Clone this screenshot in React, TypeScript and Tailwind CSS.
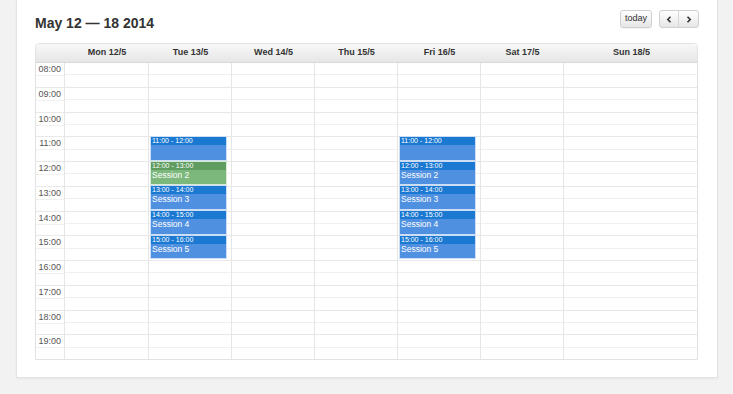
import React from 'react';

const days = [
  { label: 'Mon 12/5', w: 'w-[84px]' },
  { label: 'Tue 13/5', w: 'w-[83px]' },
  { label: 'Wed 14/5', w: 'w-[83px]' },
  { label: 'Thu 15/5', w: 'w-[83px]' },
  { label: 'Fri 16/5', w: 'w-[83px]' },
  { label: 'Sat 17/5', w: 'w-[83px]' },
  { label: 'Sun 18/5', w: 'w-[135px]' },
];

const hours = ['08:00', '09:00', '10:00', '11:00', '12:00', '13:00', '14:00', '15:00', '16:00', '17:00', '18:00', '19:00'];

const HOUR = 296 / 12;

type Ev = { start: number; title: string; green?: boolean };

const tueEvents: Ev[] = [
  { start: 11, title: '' },
  { start: 12, title: 'Session 2', green: true },
  { start: 13, title: 'Session 3' },
  { start: 14, title: 'Session 4' },
  { start: 15, title: 'Session 5' },
];

const friEvents: Ev[] = [
  { start: 11, title: '' },
  { start: 12, title: 'Session 2' },
  { start: 13, title: 'Session 3' },
  { start: 14, title: 'Session 4' },
  { start: 15, title: 'Session 5' },
];

const pad = (n: number) => (n < 10 ? '0' + n : '' + n) + ':00';

function Event({ ev }: { ev: Ev }) {
  return (
    <div
      className={`absolute left-[1px] w-[77px] flex flex-col border border-white/70 ${ev.green ? 'bg-[#7cb87c]' : 'bg-[#5090e0]'}`}
      style={{ top: (ev.start - 8) * HOUR - 1, height: HOUR }}
    >
      <div className={`h-[8px] px-[1px] text-[7px] leading-[8px] text-white ${ev.green ? 'bg-[#5f9c5f]' : 'bg-[#1b79d2]'}`}>
        {pad(ev.start)} - {pad(ev.start + 1)}
      </div>
      <div className="px-[1px] text-[8.5px] leading-[11px] text-white">{ev.title}</div>
    </div>
  );
}

function Slots({ labels }: { labels?: boolean }) {
  return (
    <div className="flex flex-col h-full">
      {hours.map((h) => (
        <div key={h} className="flex-1 flex flex-col border-b border-[#e8e8e8] last:border-b-0">
          <div className="flex-1 border-b border-[#f0f0f0] text-[9px] text-[#555] text-right pr-[3px] leading-[12px]">
            {labels ? h : null}
          </div>
          <div className="flex-1" />
        </div>
      ))}
    </div>
  );
}

export default function App() {
  return (
    <div className="min-h-screen bg-[#f2f2f2] pl-4 font-['Liberation_Sans',Arial,sans-serif] text-[#333]">
      <div className="w-[702px] h-[378px] bg-white border-x border-b border-[#e3e3e3] shadow-[0_1px_2px_rgba(0,0,0,0.05)] px-[18px]">
        <div className="flex items-center justify-between h-[43px] pt-[1px]">
          <h2 className="text-[14px] font-bold text-[#333] mt-[3px]">May 12 — 18 2014</h2>
          <div className="flex items-center gap-[7px] -mt-[6px]">
            <button className="h-[18px] px-[4px] text-[9px] text-[#333] bg-gradient-to-b from-white to-[#e6e6e6] border border-[#d0d0d0] rounded-[3px] shadow-[0_1px_1px_rgba(0,0,0,0.05)]">
              today
            </button>
            <div className="flex h-[18px] border border-[#d0d0d0] rounded-[3px] bg-gradient-to-b from-white to-[#e6e6e6] overflow-hidden">
              <button className="w-[19px] flex items-center justify-center border-r border-[#d6d6d6]">
                <svg width="6" height="7" viewBox="0 0 6 7"><path d="M4.5 0.8 L1.8 3.5 L4.5 6.2" fill="none" stroke="#333" strokeWidth="1.6" /></svg>
              </button>
              <button className="w-[19px] flex items-center justify-center">
                <svg width="6" height="7" viewBox="0 0 6 7"><path d="M1.5 0.8 L4.2 3.5 L1.5 6.2" fill="none" stroke="#333" strokeWidth="1.6" /></svg>
              </button>
            </div>
          </div>
        </div>

        <div className="w-[663px] border border-[#e2e2e2] rounded-t-[4px] overflow-hidden">
          <div className="flex h-[19px] bg-gradient-to-b from-[#f8f8f8] to-[#e6e6e6] border-b border-[#d8d8d8]">
            <div className="w-[29px] shrink-0" />
            {days.map((d) => (
              <div key={d.label} className={`${d.w} shrink-0 flex items-center justify-center text-[9px] font-bold text-[#333]`}>
                {d.label}
              </div>
            ))}
          </div>
          <div className="flex h-[296px]">
            <div className="w-[29px] shrink-0 border-r border-[#e6e6e6]">
              <Slots labels />
            </div>
            {days.map((d, i) => (
              <div key={d.label} className={`${d.w} shrink-0 relative ${i < days.length - 1 ? 'border-r border-[#e6e6e6]' : ''}`}>
                <Slots />
                {i === 1 && tueEvents.map((ev) => <Event key={ev.start} ev={ev} />)}
                {i === 4 && friEvents.map((ev) => <Event key={ev.start} ev={ev} />)}
              </div>
            ))}
          </div>
        </div>
      </div>
    </div>
  );
}
